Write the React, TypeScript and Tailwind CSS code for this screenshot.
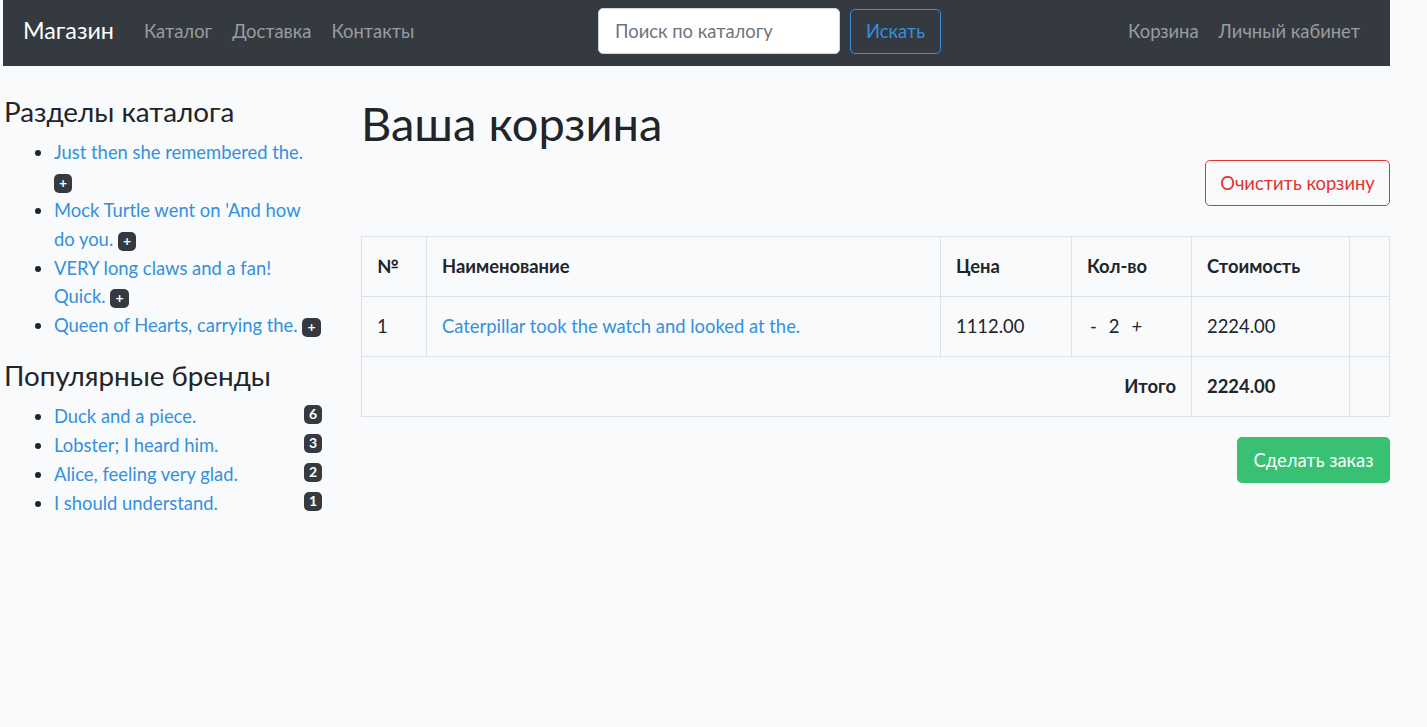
import React from 'react';

const FONT = "font-['Lato','Noto_Sans',sans-serif]";

// lines are split as in the reference so wrapping matches
const sections = [
  { lines: ['Just then she remembered the.'], badgeOwnLine: true },
  { lines: ["Mock Turtle went on 'And how", 'do you.'], badgeOwnLine: false },
  { lines: ['VERY long claws and a fan!', 'Quick.'], badgeOwnLine: false },
  { lines: ['Queen of Hearts, carrying the.'], badgeOwnLine: false },
];

const brands = [
  { title: 'Duck and a piece.', count: 6 },
  { title: 'Lobster; I heard him.', count: 3 },
  { title: 'Alice, feeling very glad.', count: 2 },
  { title: 'I should understand.', count: 1 },
];

const Badge: React.FC<{ children: React.ReactNode; className?: string }> = ({ children, className = '' }) => (
  <span
    className={`inline-block bg-[#343a40] text-white text-[14px] font-bold leading-none px-[5px] pt-[2px] pb-[3px] min-w-[18px] text-center rounded-[5px] align-middle ${className}`}
  >
    {children}
  </span>
);

const Navbar: React.FC = () => (
  <nav className="h-[66px] bg-[#343a40] flex items-start px-[20px] pt-[8px]">
    <div className="flex items-center h-[46px] w-[398px]">
      <a className="text-white text-[23.3px] mr-[20px] leading-none">Магазин</a>
      <ul className="flex items-center text-[18.4px] text-[#9a9da0]">
        <li className="px-[10px]">Каталог</li>
        <li className="px-[10px]">Доставка</li>
        <li className="px-[10px]">Контакты</li>
      </ul>
    </div>
    <form className="flex items-center h-[46px] ml-[177px]">
      <input
        className="w-[242px] h-[46px] bg-white rounded-[5px] border border-[#ced4da] px-[16px] text-[18.4px] placeholder:text-[#6c757d] outline-none"
        placeholder="Поиск по каталогу"
      />
      <button
        type="button"
        className="ml-[10px] h-[45px] w-[91px] rounded-[5px] border border-[#3490dc] text-[#3490dc] text-[18.4px]"
      >
        Искать
      </button>
    </form>
    <ul className="flex items-center h-[46px] ml-auto text-[18.4px] text-[#9a9da0]">
      <li className="px-[10px]">Корзина</li>
      <li className="px-[10px]">Личный кабинет</li>
    </ul>
  </nav>
);

const Sidebar: React.FC = () => (
  <aside className="w-[318px] shrink-0">
    <h4 className="text-[27.8px] leading-[32.4px] mb-[10px]">Разделы каталога</h4>
    <ul className="list-disc pl-[50px] mb-[20px]">
      {sections.map((s, i) => (
        <li key={i}>
          {s.lines.map((line, j) => (
            <React.Fragment key={j}>
              {j > 0 && <br />}
              <a className="text-[#3490dc]">{line}</a>
            </React.Fragment>
          ))}{' '}
          {s.badgeOwnLine && <br />}
          <Badge>+</Badge>
        </li>
      ))}
    </ul>
    <h4 className="text-[27.8px] leading-[32.4px] mb-[10px]">Популярные бренды</h4>
    <ul className="list-disc pl-[50px]">
      {brands.map((b, i) => (
        <li key={i}>
          <a className="text-[#3490dc]">{b.title}</a>
          <Badge className="float-right mt-[3px]">{b.count}</Badge>
        </li>
      ))}
    </ul>
  </aside>
);

const cell = 'border border-[#dee2e6] p-[15px]';

const Cart: React.FC = () => (
  <main className="flex-1">
    <h1 className="text-[47px] leading-[54px] mb-[10px]">Ваша корзина</h1>
    <div className="flex justify-end">
      <button
        type="button"
        className="h-[46px] w-[185px] rounded-[5px] border border-[#e3342f] text-[#e3342f] text-[18.4px]"
      >
        Очистить корзину
      </button>
    </div>
    <table className="w-full table-fixed border-collapse border border-[#dee2e6] mt-[30px] mb-[20px]">
      <colgroup>
        <col className="w-[65px]" />
        <col className="w-[514px]" />
        <col className="w-[131px]" />
        <col className="w-[120px]" />
        <col className="w-[158px]" />
        <col />
      </colgroup>
      <thead>
        <tr className="text-left">
          <th className={`${cell} font-bold h-[60px]`}>№</th>
          <th className={`${cell} font-bold`}>Наименование</th>
          <th className={`${cell} font-bold`}>Цена</th>
          <th className={`${cell} font-bold`}>Кол-во</th>
          <th className={`${cell} font-bold`}>Стоимость</th>
          <th className={cell}></th>
        </tr>
      </thead>
      <tbody>
        <tr>
          <td className={`${cell} h-[60px]`}>1</td>
          <td className={cell}>
            <a className="text-[#3490dc]">Caterpillar took the watch and looked at the.</a>
          </td>
          <td className={cell}>1112.00</td>
          <td className={cell}>
            <span className="inline-flex items-center pl-[3px] gap-[12px]">
              <span>-</span>
              <span>2</span>
              <span className="italic">+</span>
            </span>
          </td>
          <td className={cell}>2224.00</td>
          <td className={cell}></td>
        </tr>
        <tr>
          <td colSpan={4} className={`${cell} text-right font-bold h-[60px]`}>
            Итого
          </td>
          <td className={`${cell} font-bold`}>2224.00</td>
          <td className={cell}></td>
        </tr>
      </tbody>
    </table>
    <div className="flex justify-end">
      <button type="button" className="h-[46px] w-[153px] rounded-[5px] bg-[#38c172] text-white text-[18.4px]">
        Сделать заказ
      </button>
    </div>
  </main>
);

export default function App() {
  return (
    <div className={`min-h-screen bg-[#f8fafc] text-[#212529] text-[18.4px] leading-[28.8px] ${FONT}`}>
      <div className="w-[1387px] ml-[3px]">
        <Navbar />
        <div className="flex pt-[30px] pl-[1px] gap-[39px]">
          <Sidebar />
          <Cart />
        </div>
      </div>
    </div>
  );
}
